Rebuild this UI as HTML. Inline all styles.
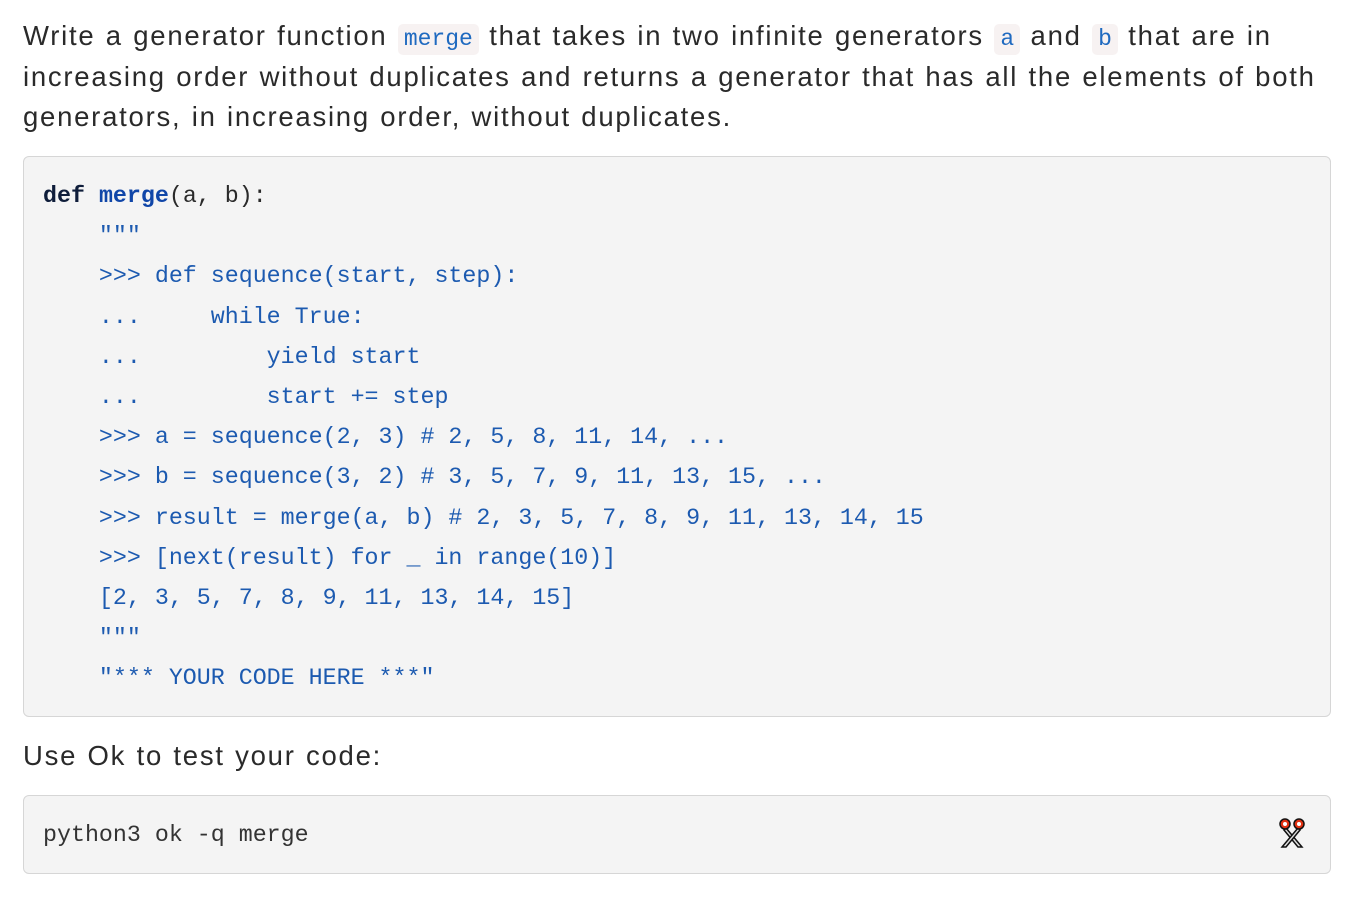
<!DOCTYPE html>
<html><head><meta charset="utf-8"><style>
body{margin:0;background:#fff;width:1352px;height:898px;overflow:hidden;font-family:"Liberation Sans",sans-serif;color:#2a2a2a}
p{position:absolute;left:23px;margin:0;font-size:27.5px;line-height:40.5px;width:1310px;letter-spacing:1.75px;word-spacing:1px}
code.i{font-family:"Liberation Mono",monospace;font-size:23px;line-height:1;display:inline-block;color:#1f6ac0;background:#f7f2f2;border-radius:5px;padding:4px 6px;letter-spacing:0}
.box{position:absolute;left:23px;width:1306px;background:#f4f4f4;border:1px solid #d6d6d6;border-radius:6px}
pre{margin:0;font-family:"Liberation Mono",monospace;font-size:23.3px;line-height:40.2px;color:#1c5ab0;position:absolute;left:19px}
.k{color:#0f1d3a;font-weight:bold}.f{color:#1046a8;font-weight:bold}.n{color:#2a2a2a}
</style></head><body>
<p style="top:16px">Write a generator function <code class="i">merge</code> that takes in two infinite generators <code class="i">a</code> and <code class="i">b</code> that are in increasing order without duplicates and returns a generator that has all the elements of both generators, in increasing order, without duplicates.</p>
<div class="box" style="top:156px;height:559px">
<pre style="top:19px"><span class="k">def</span> <span class="f">merge</span><span class="n">(a, b):</span>
    """
    >>> def sequence(start, step):
    ...     while True:
    ...         yield start
    ...         start += step
    >>> a = sequence(2, 3) # 2, 5, 8, 11, 14, ...
    >>> b = sequence(3, 2) # 3, 5, 7, 9, 11, 13, 15, ...
    >>> result = merge(a, b) # 2, 3, 5, 7, 8, 9, 11, 13, 14, 15
    >>> [next(result) for _ in range(10)]
    [2, 3, 5, 7, 8, 9, 11, 13, 14, 15]
    """
    "*** YOUR CODE HERE ***"</pre>
</div>
<p style="top:736px">Use Ok to test your code:</p>
<div class="box" style="top:795px;height:77px">
<pre style="top:19px;color:#333">python3 ok -q merge</pre>
<svg style="position:absolute;left:1252px;top:20px" width="32" height="34" viewBox="0 0 32 34">
<path d="M10 12 L26 31 L22 31 L8 14 Z" fill="#ddd" stroke="#111" stroke-width="1.5"/>
<path d="M22 12 L6 31 L10 31 L24 14 Z" fill="#ddd" stroke="#111" stroke-width="1.5"/>
<circle cx="9" cy="8" r="5" fill="#e03010" stroke="#111" stroke-width="1.5"/>
<circle cx="23" cy="8" r="5" fill="#e03010" stroke="#111" stroke-width="1.5"/>
<circle cx="9" cy="8" r="2" fill="#fff"/><circle cx="23" cy="8" r="2" fill="#fff"/>
</svg>
</div>
</body></html>
